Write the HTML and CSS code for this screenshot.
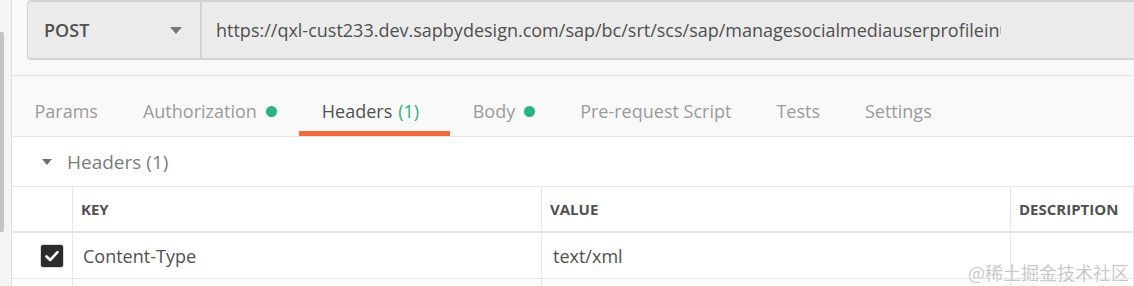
FILE: index.html
```html
<!DOCTYPE html>
<html lang="en">
<head>
<meta charset="UTF-8">
<meta name="viewport" content="width=device-width, initial-scale=1.0">
<title>Request Headers</title>
<link rel="stylesheet" href="styles.css">
</head>
<body>
<div class="sidebar">
  <div class="thumb"></div>
</div>
<div class="main">
  <div class="request-bar">
    <div class="url-box">
      <div class="method">
        <span>POST</span>
        <span class="arrow"></span>
      </div>
      <div class="url">https://qxl-cust233.dev.sapbydesign.com/sap/bc/srt/scs/sap/managesocialmediauserprofilein<span class="caret"></span></div>
    </div>
  </div>

  <div class="tabs">
    <div class="tab">Params</div>
    <div class="tab">Authorization <span class="dot"></span></div>
    <div class="tab active">Headers <span class="count">(1)</span></div>
    <div class="tab">Body <span class="dot"></span></div>
    <div class="tab">Pre-request Script</div>
    <div class="tab">Tests</div>
    <div class="tab">Settings</div>
  </div>

  <div class="section-title">
    <span class="toggle"></span>
    <span>Headers (1)</span>
  </div>

  <div class="table">
    <div class="cell head"></div>
    <div class="cell head">KEY</div>
    <div class="cell head">VALUE</div>
    <div class="cell head">DESCRIPTION</div>

    <div class="cell check-cell">
      <div class="checkbox">
        <svg width="16" height="16" viewBox="0 0 16 16"><path d="M2.5 8.5 L6.2 12 L13.5 4.2" fill="none" stroke="#fff" stroke-width="2.6" stroke-linecap="round" stroke-linejoin="round"/></svg>
      </div>
    </div>
    <div class="cell">Content-Type</div>
    <div class="cell value">text/xml</div>
    <div class="cell"></div>

    <div class="cell empty"></div>
    <div class="cell empty"></div>
    <div class="cell empty"></div>
    <div class="cell empty"></div>
  </div>

  <div class="watermark">@稀土掘金技术社区</div>
</div>
</body>
</html>
```

FILE: styles.css
```css
body {
  margin: 0;
  padding: 0;
  display: flex;
  height: 286px;
  overflow: hidden;
  font-family: "Open Sans", "Noto Sans", sans-serif;
  color: #505050;
  background-color: #fff;
}

.sidebar {
  width: 11px;
  background-color: #f4f4f4;
  border-right: 1px solid #e0e0e0;
}

.thumb {
  margin-top: 32px;
  width: 4px;
  height: 200px;
  background-color: #c4c4c4;
  border-radius: 0 2px 2px 0;
}

.main {
  flex: 1;
  position: relative;
  min-width: 0;
}

.request-bar {
  background-color: #f9f9f9;
  padding: 0 0 15px 15px;
  border-bottom: 1px solid #e4e4e4;
}

.url-box {
  display: flex;
  height: 60px;
  box-sizing: border-box;
  background-color: #ebebeb;
  border: 2px solid #d3d3d3;
  border-left-width: 1px;
  border-right: none;
  border-radius: 4px 0 0 4px;
}

.method {
  width: 174px;
  box-sizing: border-box;
  padding: 0 18px 0 16px;
  display: flex;
  align-items: center;
  justify-content: space-between;
  border-right: 2px solid #d3d3d3;
  font-size: 18px;
  font-weight: 600;
}

.arrow {
  width: 0;
  height: 0;
  border-left: 6px solid transparent;
  border-right: 6px solid transparent;
  border-top: 7px solid #7a7a7a;
}

.url {
  padding-left: 14px;
  display: flex;
  align-items: center;
  font-size: 18px;
  white-space: nowrap;
}

.caret {
  display: inline-block;
  width: 1px;
  height: 8px;
  margin-left: 1px;
  background-color: #b8b8b8;
}

.tabs {
  display: flex;
  height: 60px;
  background-color: #f9f9f9;
  border-bottom: 1px solid #e6e6e6;
}

.tab {
  display: flex;
  align-items: center;
  box-sizing: border-box;
  padding: 10px 22.5px 0;
  font-size: 18px;
  color: #9b9b9b;
  white-space: nowrap;
}

.tab.active {
  color: #505050;
  padding-right: 31px;
  box-shadow: inset 0 -5px 0 #f26b3a;
}

.count {
  color: #26b47f;
  margin-left: 6px;
}

.dot {
  width: 11px;
  height: 11px;
  margin-left: 9px;
  border-radius: 50%;
  background-color: #26b47f;
}

.section-title {
  height: 49px;
  display: flex;
  align-items: center;
  padding-left: 30px;
  font-size: 19px;
  color: #7c7c7c;
}

.toggle {
  width: 0;
  height: 0;
  border-left: 5px solid transparent;
  border-right: 5px solid transparent;
  border-top: 6px solid #707070;
  margin-right: 15px;
}

.table {
  display: grid;
  grid-template-columns: 61px 469px 469px 1fr;
  grid-template-rows: 46px 46px 7px;
  border-top: 1px solid #e6e6e6;
}

.cell {
  display: flex;
  align-items: center;
  padding-left: 10px;
  border-right: 1px solid #e6e6e6;
  border-bottom: 1px solid #e6e6e6;
  font-size: 18px;
  white-space: nowrap;
}

.cell.head {
  padding-left: 8px;
  font-size: 15px;
  font-weight: 700;
  border-bottom-width: 2px;
}

.cell.value {
  padding-left: 11px;
}

.cell.empty {
  border-bottom: none;
}

.check-cell {
  justify-content: flex-end;
  padding: 0 8px 0 0;
}

.checkbox {
  width: 22px;
  height: 22px;
  border: 1px solid #d8d8d8;
  border-radius: 3px;
  background-color: #2b2b2b;
  display: flex;
  align-items: center;
  justify-content: center;
}

.watermark {
  position: absolute;
  right: 5px;
  bottom: 5px;
  font-family: "Noto Sans CJK SC", sans-serif;
  font-size: 18px;
  line-height: 1;
  color: #c9c9c9;
  text-shadow: 0 0 1px #fff;
}
```
